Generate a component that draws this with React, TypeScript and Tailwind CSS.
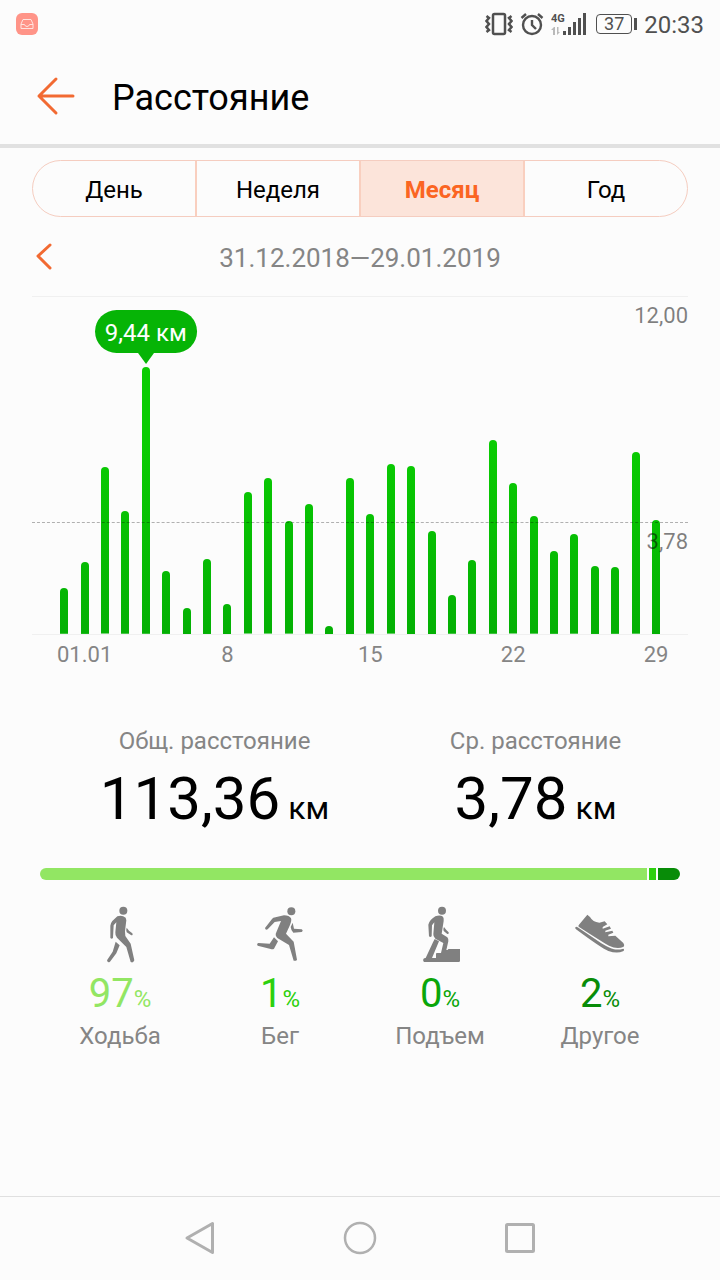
import type { ReactNode } from 'react'

// ─── Data ─────────────────────────────────────────────────────────────────────

const MAX_KM = 12
const AVERAGE_KM = 3.78
const SELECTED_DAY = 4

const DAILY_KM = [
  1.63, 2.56, 5.93, 4.37, 9.5, 2.24, 0.94, 2.67, 1.08, 5.04, 5.54, 4.01, 4.62, 0.29, 5.57, 4.26,
  6.04, 6.0, 3.67, 1.38, 2.63, 6.9, 5.36, 4.19, 2.95, 3.55, 2.42, 2.38, 6.47, 4.06,
]

const DAY_LABELS: Record<number, string> = { 1: '01.01', 8: '8', 15: '15', 22: '22', 29: '29' }

const PERIODS = ['День', 'Неделя', 'Месяц', 'Год']

const TOTALS = [
  { label: 'Общ. расстояние', value: '113,36' },
  { label: 'Ср. расстояние', value: '3,78' },
]

interface Activity {
  label: string
  percent: number
  color: string
  icon: ReactNode
}

const ACTIVITIES: Activity[] = [
  { label: 'Ходьба', percent: 97, color: 'text-[#92e663]', icon: <WalkIcon /> },
  { label: 'Бег', percent: 1, color: 'text-[#2cd00e]', icon: <RunIcon /> },
  { label: 'Подъем', percent: 0, color: 'text-[#0aa60a]', icon: <ClimbIcon /> },
  { label: 'Другое', percent: 2, color: 'text-[#088c08]', icon: <ShoeIcon /> },
]

// ─── Icons ────────────────────────────────────────────────────────────────────

function WalkIcon() {
  return (
    <svg viewBox="36 36 168 192" className="h-16 w-14" fill="currentColor" aria-hidden="true">
      <circle cx="130" cy="62" r="12" />
      <path d="M112 79Q126 74 137 83L139 91L135 124L136 138L152 161L163 211Q160 220 152 216L139 171L111 143Q105 137 106 127L109 97L101 106L99 143Q96 149 91 144V107Q92 99 97 93Z" />
      <path d="M140 113L147 122L157 130Q160 136 154 136L140 127Q137 121 140 113Z" />
      <path d="M107 155L119 166L109 190L90 215Q83 220 81 211L98 185Z" />
    </svg>
  )
}

function RunIcon() {
  return (
    <svg viewBox="516 36 168 192" className="h-16 w-14" fill="currentColor" aria-hidden="true">
      <circle cx="634" cy="64" r="12" />
      <path d="M580 83L612 76Q628 76 633 85Q636 92 629 107L618 131L641 155L651 209Q648 214 641 212L627 165L592 144Q584 136 589 127L603 93L584 96L563 118Q556 121 555 114L576 87Z" />
      <path d="M638 98L642 116L665 118Q671 122 665 126L640 128Q633 121 632 111Z" />
      <path d="M582 142L594 154L582 176Q578 179 572 177L533 167Q529 161 535 159L569 161Z" />
    </svg>
  )
}

function ClimbIcon() {
  return (
    <svg viewBox="36 156 168 192" className="h-16 w-14" fill="currentColor" aria-hidden="true">
      <circle cx="126" cy="182" r="12" />
      <path d="M106 199Q120 193 129 200Q132 204 131 213L125 251L142 262Q146 267 145 274L139 300H143Q143 297 147 297H180V332Q180 336 176 336H72Q68 333 70 327Q72 324 77 324L99 277L104 267L117 274L96 324H108V311Q108 309 111 309H123L130 279L106 266Q99 260 100 252L103 217L96 226L95 259Q91 263 87 259L85 224Q88 210 106 199Z" />
      <path d="M132 231L139 240L146 247Q148 253 142 252L131 243Q128 239 132 231Z" />
    </svg>
  )
}

function ShoeIcon() {
  return (
    <svg viewBox="516 156 168 192" className="h-16 w-14" fill="currentColor" aria-hidden="true">
      <path d="M562 194L570 201Q578 216 598 218L614 214L622 223L608 231V236L629 229L633 236L616 242V247L637 242L640 248L625 254V259L646 257L670 279Q675 286 671 290Q652 299 627 287Q604 274 536 230Q534 227 537 224Z" />
      <path d="M526 232Q528 229 533 232L604 280Q629 295 642 298Q656 300 670 296Q675 299 669 304Q651 312 625 303Q606 296 528 238Q525 236 526 232Z" />
    </svg>
  )
}

function VibrateIcon() {
  return (
    <svg viewBox="0 0 28 24" className="h-6 w-7" fill="none" stroke="currentColor" strokeWidth="2.500" aria-hidden="true">
      <rect x="8" y="2" width="12" height="20" rx="1.500" />
      <path d="M1.500 4L4 6L1.500 9L4 12L1.500 15L4 18L1.500 20" />
      <path d="M26.500 4L24 6L26.500 9L24 12L26.500 15L24 18L26.500 20" />
    </svg>
  )
}

function AlarmIcon() {
  return (
    <svg viewBox="0 0 24 24" className="h-6 w-6" fill="none" stroke="currentColor" strokeWidth="2.400" aria-hidden="true">
      <circle cx="12" cy="13" r="9" />
      <path d="M12 8V13L16 17M1.500 6L6 2M22.500 6L18 2" />
    </svg>
  )
}

function SignalIcon() {
  return (
    <svg viewBox="0 0 36 24" className="h-6 w-9" fill="currentColor" aria-hidden="true">
      <path d="M12 19h3v4h-3zM17 15h3v8h-3zM22 10h3v13h-3zM27 6h3v17h-3zM32 1h3v22h-3z" />
      <path d="M3 15L0 18H2V23H4V15ZM6 15V23L9 20H7.500V15Z" fill="#b9b9b9" />
      <text x="0" y="10" fontSize="11" fontWeight="700" className="font-[Roboto,sans-serif]">
        4G
      </text>
    </svg>
  )
}

// ─── Sections ─────────────────────────────────────────────────────────────────

function StatusBar() {
  return (
    <div className="flex h-12 items-center justify-between px-4 text-[#505050]">
      <span className="flex h-[22px] w-[22px] items-center justify-center rounded-md bg-[#ff9488]">
        <svg viewBox="0 0 14 14" className="h-[14px] w-[14px]" fill="none" stroke="#ffe3df" aria-hidden="true">
          <path d="M3 2.500H11L13 7V11.500H1V7ZM1 7.500H4.500Q5 9.500 7 9.500T9.500 7.500H13" />
        </svg>
      </span>
      <div className="flex items-center gap-[7px]">
        <VibrateIcon />
        <AlarmIcon />
        <SignalIcon />
        <span className="ml-0.5 flex items-center gap-0.5">
          <span className="flex h-5 w-9 items-center justify-center rounded-sm border border-[#505050] text-lg leading-none">
            37
          </span>
          <span className="h-3 w-[3px] bg-[#505050]" />
        </span>
        <span className="pt-0.5 text-2xl">20:33</span>
      </div>
    </div>
  )
}

function Header() {
  return (
    <header className="flex h-[100px] items-center gap-9 border-b-4 border-[#e1e1e1] px-9">
      <button type="button" aria-label="Назад" className="text-[#f26a32]">
        <svg viewBox="0 0 40 40" className="h-10 w-10" fill="none" stroke="currentColor" strokeWidth="3" strokeLinecap="round" strokeLinejoin="round" aria-hidden="true">
          <path d="M20 3L3 20L20 37M3 20H37" />
        </svg>
      </button>
      <h1 className="pt-1 text-4xl text-black">Расстояние</h1>
    </header>
  )
}

function PeriodTabs() {
  return (
    <div className="flex h-[57px] divide-x-2 divide-[#f9cfbf] overflow-hidden rounded-full border border-[#f5cdc0]">
      {PERIODS.map((period) => (
        <button
          key={period}
          type="button"
          aria-pressed={period === 'Месяц'}
          className={`flex-1 pt-0.5 text-2xl ${period === 'Месяц' ? 'bg-[#fce4da] font-bold text-[#fb6522]' : 'text-black'}`}
        >
          {period}
        </button>
      ))}
    </div>
  )
}

function DistanceChart() {
  return (
    <section>
      <div className="relative flex h-[339px] border-y border-[#f0f0f0] px-[22px]">
        {DAILY_KM.map((km, i) => (
          <div key={i} className="flex flex-1 items-end justify-center">
            <div
              className="relative w-2 rounded-t-full bg-linear-to-t from-[#04b004] to-[#0acc02] to-70% bg-[length:100%_270px] bg-bottom"
              style={{ height: `${(km / MAX_KM) * 100}%` }}
            >
              {i === SELECTED_DAY && (
                <div className="absolute bottom-full left-1/2 flex -translate-x-1/2 flex-col items-center pb-[3px]">
                  <span className="flex h-[43px] items-center rounded-full bg-[#06b406] px-[10px] pt-0.5 text-2xl whitespace-nowrap text-white">
                    9,44 км
                  </span>
                  <svg viewBox="0 0 16 11" className="h-[11px] w-4" fill="#06b406" aria-hidden="true">
                    <path d="M0 0H16L8 11Z" />
                  </svg>
                </div>
              )}
            </div>
          </div>
        ))}
        <span className="absolute top-[5px] right-0 text-[22px] leading-7 text-black/50">12,00</span>
        <div
          className="absolute inset-x-0 border-t border-dashed border-black/30"
          style={{ bottom: `${(AVERAGE_KM / MAX_KM) * 100 + 1.5}%` }}
        >
          <span className="absolute top-[5px] right-0 text-[22px] leading-7 text-black/50">3,78</span>
        </div>
      </div>
      <div className="flex h-9 items-center px-[22px] pt-0.5 text-[22px] text-[#858585]">
        {DAILY_KM.map((_, i) => (
          <span key={i} className="flex w-0 flex-1 justify-center whitespace-nowrap">
            {DAY_LABELS[i]}
          </span>
        ))}
      </div>
    </section>
  )
}

function Totals() {
  return (
    <section className="grid grid-cols-2 pt-[54px] pr-6 pl-[54px] text-center">
      {TOTALS.map(({ label, value }) => (
        <div key={label}>
          <p className="text-2xl text-[#858585]">{label}</p>
          <p className="mt-1.5 text-6xl leading-[72px] text-black">
            {value}
            <span className="ml-2 text-[32px]">км</span>
          </p>
        </div>
      ))}
    </section>
  )
}

function ActivityBreakdown() {
  return (
    <section className="px-10 pt-6">
      <div className="flex h-3 gap-0.5 overflow-hidden rounded-full">
        <span className="flex-1 bg-[#92e663]" />
        <span className="w-[7px] bg-[#2cd00e]" />
        <span className="w-[22px] bg-[#088c08]" />
      </div>
      <ul className="grid grid-cols-4 pt-[22px] text-center">
        {ACTIVITIES.map(({ label, percent, color, icon }) => (
          <li key={label} className="flex flex-col items-center text-[#808080]">
            {icon}
            <p className={`mt-0.5 text-[40px] leading-[52px] ${color}`}>
              {percent}
              <span className="text-2xl">%</span>
            </p>
            <p className="text-2xl text-[#858585]">{label}</p>
          </li>
        ))}
      </ul>
    </section>
  )
}

function NavigationBar() {
  return (
    <nav className="mt-auto flex h-[84px] items-center justify-center gap-[124px] border-t border-[#e0e0e0] text-[#b0b0b0]">
      <button type="button" aria-label="Назад">
        <svg viewBox="0 0 36 36" className="h-9 w-9" fill="none" stroke="currentColor" strokeWidth="3" strokeLinejoin="round" aria-hidden="true">
          <path d="M30.500 2.500V31.500L5 17Z" />
        </svg>
      </button>
      <button type="button" aria-label="Домой">
        <svg viewBox="0 0 36 36" className="h-9 w-9" fill="none" stroke="currentColor" strokeWidth="2.500" aria-hidden="true">
          <circle cx="18" cy="17" r="15" />
        </svg>
      </button>
      <button type="button" aria-label="Недавние">
        <svg viewBox="0 0 36 36" className="h-9 w-9" fill="none" stroke="currentColor" strokeWidth="3" aria-hidden="true">
          <rect x="4.500" y="3.500" width="27" height="27" rx="1" />
        </svg>
      </button>
    </nav>
  )
}

// ─── Page ─────────────────────────────────────────────────────────────────────

export default function App() {
  return (
    <div className="flex min-h-screen flex-col bg-[#fcfcfc] font-[Roboto,'Noto_Sans',sans-serif]">
      <StatusBar />
      <Header />
      <main>
        <div className="px-8 pt-3">
          <PeriodTabs />
          <div className="flex h-[79px] items-center">
            <button type="button" aria-label="Предыдущий месяц" className="w-6 text-[#f26a32]">
              <svg viewBox="0 0 24 28" className="h-7 w-6" fill="none" stroke="currentColor" strokeWidth="3" strokeLinecap="round" strokeLinejoin="round" aria-hidden="true">
                <path d="M18 2L6 13L18 25" />
              </svg>
            </button>
            <p className="flex-1 pt-1 pr-6 text-center text-[26px] text-[#858585]">31.12.2018—29.01.2019</p>
          </div>
          <DistanceChart />
        </div>
        <Totals />
        <ActivityBreakdown />
      </main>
      <NavigationBar />
    </div>
  )
}
